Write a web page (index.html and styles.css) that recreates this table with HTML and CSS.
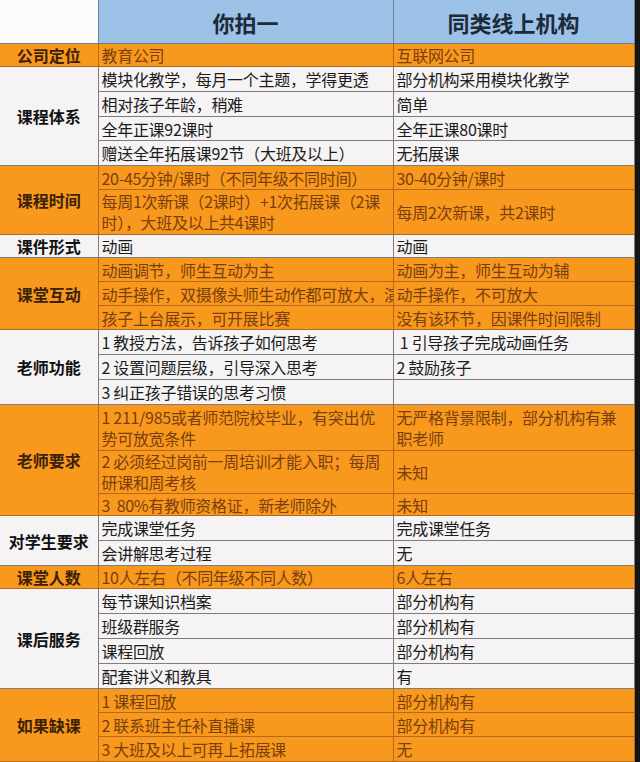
FILE: index.html
```html
<!DOCTYPE html>
<html lang="zh">
<head>
<meta charset="utf-8">
<link rel="stylesheet" href="styles.css">
</head>
<body>
<table class="cmp">
  <colgroup><col class="c1"><col class="c2"><col class="c3"></colgroup>
  <tr class="head">
    <th class="blank"></th>
    <th>你拍一</th>
    <th>同类线上机构</th>
  </tr>
  <tr class="o h23"><td class="lab">公司定位</td><td>教育公司</td><td>互联网公司</td></tr>

  <tr class="w h25"><td class="lab" rowspan="4">课程体系</td><td>模块化教学，每月一个主题，学得更透</td><td>部分机构采用模块化教学</td></tr>
  <tr class="w h25"><td>相对孩子年龄，稍难</td><td>简单</td></tr>
  <tr class="w h24"><td>全年正课92课时</td><td>全年正课80课时</td></tr>
  <tr class="w h25"><td>赠送全年拓展课92节（大班及以上）</td><td>无拓展课</td></tr>

  <tr class="o h24"><td class="lab" rowspan="2">课程时间</td><td>20-45分钟/课时（不同年级不同时间）</td><td>30-40分钟/课时</td></tr>
  <tr class="o h45"><td class="wrap">每周1次新课（2课时）+1次拓展课（2课时），大班及以上共4课时</td><td>每周2次新课，共2课时</td></tr>

  <tr class="w h23"><td class="lab">课件形式</td><td>动画</td><td>动画</td></tr>

  <tr class="o h24"><td class="lab" rowspan="3">课堂互动</td><td>动画调节，师生互动为主</td><td>动画为主，师生互动为辅</td></tr>
  <tr class="o h24"><td class="clip"><span class="cut">动手操作，双摄像头师生动作都可放大，演</span></td><td>动手操作，不可放大</td></tr>
  <tr class="o h24"><td>孩子上台展示，可开展比赛</td><td>没有该环节，因课件时间限制</td></tr>

  <tr class="w h25"><td class="lab" rowspan="3">老师功能</td><td>1 教授方法，告诉孩子如何思考</td><td>&nbsp;1 引导孩子完成动画任务</td></tr>
  <tr class="w h25"><td>2 设置问题层级，引导深入思考</td><td>2 鼓励孩子</td></tr>
  <tr class="w h25"><td>3 纠正孩子错误的思考习惯</td><td></td></tr>

  <tr class="o h46"><td class="lab" rowspan="3">老师要求</td><td class="wrap">1 211/985或者师范院校毕业，有突出优势可放宽条件</td><td class="wrap narrow">无严格背景限制，部分机构有兼职老师</td></tr>
  <tr class="o h42"><td class="wrap">2 必须经过岗前一周培训才能入职；每周研课和周考核</td><td>未知</td></tr>
  <tr class="o h22"><td>3&nbsp;&nbsp;80%有教师资格证，新老师除外</td><td>未知</td></tr>

  <tr class="w h25"><td class="lab" rowspan="2">对学生要求</td><td>完成课堂任务</td><td>完成课堂任务</td></tr>
  <tr class="w h25"><td>会讲解思考过程</td><td>无</td></tr>

  <tr class="o h23"><td class="lab">课堂人数</td><td>10人左右（不同年级不同人数）</td><td>6人左右</td></tr>

  <tr class="w h25"><td class="lab" rowspan="4">课后服务</td><td>每节课知识档案</td><td>部分机构有</td></tr>
  <tr class="w h25"><td>班级群服务</td><td>部分机构有</td></tr>
  <tr class="w h25"><td>课程回放</td><td>部分机构有</td></tr>
  <tr class="w h25"><td>配套讲义和教具</td><td>有</td></tr>

  <tr class="o h24"><td class="lab" rowspan="3">如果缺课</td><td>1 课程回放</td><td>部分机构有</td></tr>
  <tr class="o h24"><td>2 联系班主任补直播课</td><td>部分机构有</td></tr>
  <tr class="o h25"><td>3 大班及以上可再上拓展课</td><td>无</td></tr>
</table>
</body>
</html>
```

FILE: styles.css
```css
html, body {
  margin: 0;
  padding: 0;
  background: #151515;
  height: 762px;
  overflow: hidden;
}

.cmp {
  width: 634px;
  border-collapse: collapse;
  table-layout: fixed;
  font-family: "Noto Sans CJK SC", "Noto Sans", sans-serif;
  font-size: 16px;
  background: #f5f3f3;
}

.c1 { width: 98px; }
.c2 { width: 295px; }
.c3 { width: 241px; }

.cmp td, .cmp th {
  padding: 0 0 0 3px;
  border: 1px solid #7d7d7d;
  overflow: hidden;
  white-space: nowrap;
  line-height: 20px;
  vertical-align: middle;
  text-align: left;
  letter-spacing: -0.3px;
}

.head th {
  height: 43px;
  background: #9cc3e7;
  color: #1d2a3a;
  font-size: 22px;
  font-weight: 700;
  text-align: center;
  border-top: none;
  border-color: #6d7f93;
  padding: 0;
  letter-spacing: 0;
}

.head th.blank {
  background: #fbfbfb;
  border-left: none;
  border-top: none;
}

.w td { background: #f5f3f3; color: #1c1c1c; }
.o td { background: #f8981c; color: #7a3f0f; border-color: #b36a1d; }

.cmp td.lab {
  text-align: center;
  font-weight: 700;
  padding: 0;
  letter-spacing: 0;
  border-left: none;
}
.w td.lab { color: #111; }
.o td.lab { color: #3b2108; }

.cmp td.wrap {
  white-space: normal;
  line-height: 21px;
  padding-right: 2px;
}

.cmp td.narrow { padding-right: 16px; }

.cmp td.clip { text-overflow: clip; }
.cut {
  display: block;
  width: 291px;
  overflow: hidden;
  white-space: nowrap;
}

.h22 td { height: 21px; }
.h23 td { height: 22px; }
.h24 td { height: 23px; }
.h25 td { height: 24px; }
.h42 td { height: 41px; }
.h45 td { height: 44px; }
.h46 td { height: 45px; }
.cmp td.lab { height: auto; }
```
